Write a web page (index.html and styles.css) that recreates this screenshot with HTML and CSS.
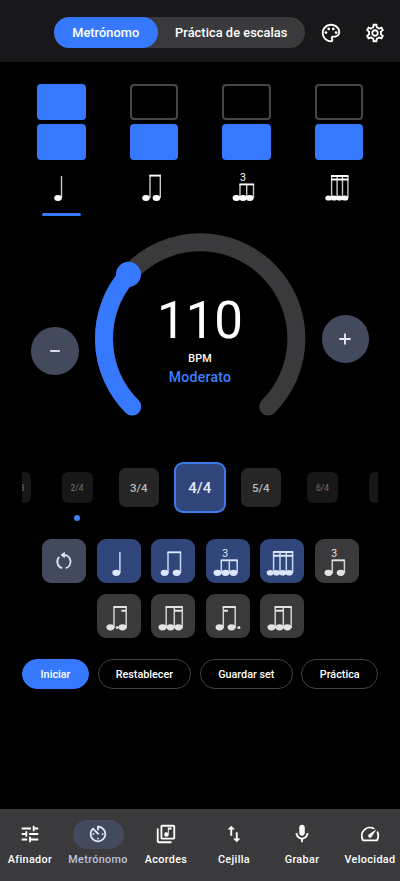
FILE: index.html
```html
<!DOCTYPE html>
<html lang="es">
<head>
<meta charset="utf-8">
<title>Metrónomo</title>
<link rel="stylesheet" href="styles.css">
</head>
<body>
<header class="topbar">
  <div class="segmented"><button class="seg seg-on">Metrónomo</button><button class="seg">Práctica de escalas</button></div>
  <svg class="top-icon palette" viewBox="0 0 24 24"><path d="M12 22C6.49 22 2 17.51 2 12S6.49 2 12 2s10 4.04 10 9c0 3.31-2.69 6-6 6h-1.77c-.28 0-.5.22-.5.5 0 .12.05.23.13.33.41.47.64 1.06.64 1.67A2.5 2.5 0 0 1 12 22zm0-18c-4.41 0-8 3.59-8 8s3.59 8 8 8c.28 0 .5-.22.5-.5a.54.54 0 0 0-.14-.35c-.41-.46-.63-1.05-.63-1.65a2.5 2.5 0 0 1 2.5-2.5H16c2.21 0 4-1.79 4-4 0-3.86-3.59-7-8-7z"/><circle cx="6.5" cy="11.5" r="1.5"/><circle cx="9.5" cy="7.5" r="1.5"/><circle cx="14.5" cy="7.5" r="1.5"/><circle cx="17.5" cy="11.5" r="1.5"/></svg>
  <svg class="top-icon gear" viewBox="0 0 24 24"><path d="M19.43 12.98c.04-.32.07-.64.07-.98s-.03-.66-.07-.98l2.11-1.65c.19-.15.24-.42.12-.64l-2-3.46c-.12-.22-.39-.3-.61-.22l-2.49 1c-.52-.4-1.08-.73-1.69-.98l-.38-2.65A.488.488 0 0 0 14 2h-4c-.25 0-.46.18-.49.42l-.38 2.65c-.61.25-1.17.59-1.69.98l-2.49-1c-.23-.09-.49 0-.61.22l-2 3.46c-.13.22-.07.49.12.64l2.11 1.65c-.04.32-.07.65-.07.98s.03.66.07.98l-2.11 1.65c-.19.15-.24.42-.12.64l2 3.46c.12.22.39.3.61.22l2.49-1c.52.4 1.08.73 1.69.98l.38 2.65c.03.24.24.42.49.42h4c.25 0 .46-.18.49-.42l.38-2.65c.61-.25 1.17-.59 1.69-.98l2.49 1c.23.09.49 0 .61-.22l2-3.46c.12-.22.07-.49-.12-.64l-2.11-1.65zm-1.98-1.71c.04.31.05.52.05.73 0 .21-.02.43-.05.73l-.14 1.13.89.7 1.08.84-.7 1.21-1.27-.51-1.04-.42-.9.68c-.43.32-.84.56-1.25.73l-1.06.43-.16 1.13-.2 1.35h-1.4l-.19-1.35-.16-1.13-1.06-.43c-.43-.18-.83-.41-1.23-.71l-.91-.7-1.06.43-1.27.51-.7-1.21 1.08-.84.89-.7-.14-1.13c-.03-.31-.05-.54-.05-.74s.02-.43.05-.73l.14-1.13-.89-.7-1.08-.84.7-1.21 1.27.51 1.04.42.9-.68c.43-.32.84-.56 1.25-.73l1.06-.43.16-1.13.2-1.35h1.39l.19 1.35.16 1.13 1.06.43c.43.18.83.41 1.23.71l.91.7 1.06-.43 1.27-.51.7 1.21-1.07.85-.89.7.14 1.13zM12 8c-2.21 0-4 1.79-4 4s1.79 4 4 4 4-1.79 4-4-1.79-4-4-4zm0 6c-1.1 0-2-.9-2-2s.9-2 2-2 2 .9 2 2-.9 2-2 2z"/></svg>
</header>

<main>
  <section class="beats">
    <div class="beat current"><i class="bar on"></i><i class="bar on"></i>
      <svg class="beat-note note" viewBox="0 0 44 44"><path class="stem" d="M22.5 12V34"/><ellipse cx="19" cy="34" rx="3.8" ry="3"/></svg></div>
    <div class="beat"><i class="bar"></i><i class="bar on"></i>
      <svg class="beat-note note" viewBox="0 0 44 44"><path class="stem" d="M18 11V34M28.3 11V34"/><path class="beam" d="M17.4 11.6H28.9"/><ellipse cx="14" cy="34" rx="3.8" ry="3"/><ellipse cx="24.4" cy="34" rx="3.8" ry="3"/></svg></div>
    <div class="beat"><i class="bar"></i><i class="bar on"></i>
      <svg class="beat-note note" viewBox="0 0 44 44"><text x="18.9" y="17">3</text><path class="stem" d="M16 20V34M22.7 20V34M29.5 20V34"/><path class="beam" d="M15.4 20.4H30.1"/><ellipse cx="12.4" cy="34" rx="3.8" ry="3"/><ellipse cx="19.1" cy="34" rx="3.8" ry="3"/><ellipse cx="25.8" cy="34" rx="3.8" ry="3"/></svg></div>
    <div class="beat"><i class="bar"></i><i class="bar on"></i>
      <svg class="beat-note note" viewBox="0 0 44 44"><path class="stem" d="M14.6 12V34M20.1 12V34M25.5 12V34M30.9 12V34"/><path class="beam" d="M14 12H31.5M14 15.5H31.5"/><ellipse cx="11.6" cy="34" rx="3.3" ry="2.6"/><ellipse cx="17" cy="34" rx="3.3" ry="2.6"/><ellipse cx="22.4" cy="34" rx="3.3" ry="2.6"/><ellipse cx="28" cy="34" rx="3.3" ry="2.6"/></svg></div>
  </section>

  <section class="tempo">
    <button class="step minus" aria-label="Menos"><svg viewBox="0 0 12 12"><path d="M1.2 6H10.8"/></svg></button>
    <div class="dial">
      <svg viewBox="0 0 212 186"><path class="track" d="M38.2 174.6A96.2 96.2 0 1 1 174.2 174.6"/><path class="value" d="M38.2 174.6A96.2 96.2 0 0 1 34.5 42.3"/><circle class="knob" cx="34.5" cy="42.3" r="12.5"/></svg>
      <div class="readout"><div class="bpm">110</div><div class="unit">BPM</div><div class="tempo-name">Moderato</div></div>
    </div>
    <button class="step plus" aria-label="Más"><svg viewBox="0 0 12 12"><path d="M.4 6H11.6M6 .4V11.6"/></svg></button>
  </section>

  <section class="meters">
    <div class="meter far edge-left"><span>8</span></div>
    <div class="meter far default">2/4</div>
    <div class="meter near">3/4</div>
    <div class="meter chosen">4/4</div>
    <div class="meter near">5/4</div>
    <div class="meter far">6/4</div>
    <div class="meter far edge-right"></div>
  </section>

  <section class="patterns">
    <button class="tile reset" aria-label="Deshacer"><svg viewBox="0 0 44 44"><path d="M23.8 29.1A6.7 6.7 0 0 0 22 16M20.2 29.1A6.7 6.7 0 0 1 17.2 18"/><path class="tip" d="M22.8 12.8V19.2L18.5 16Z"/></svg></button>
    <button class="tile on"><svg class="note" viewBox="0 0 44 44"><path class="stem" d="M22.9 13V34"/><ellipse cx="19.3" cy="33.8" rx="4" ry="3.1"/></svg></button>
    <button class="tile on"><svg class="note" viewBox="0 0 44 44"><path class="stem" d="M17 13V34M29.5 13V34"/><path class="beam" d="M16.4 13.3H30.1"/><ellipse cx="13.6" cy="33.8" rx="4" ry="3.1"/><ellipse cx="25.7" cy="33.8" rx="4" ry="3.1"/></svg></button>
    <button class="tile on"><svg class="note" viewBox="0 0 44 44"><text x="19.3" y="18">3</text><path class="stem" d="M15.3 21V34M23.3 21V34M31.2 21V34"/><path class="beam" d="M14.7 21.3H31.8"/><ellipse cx="11.5" cy="33.8" rx="4" ry="3.1"/><ellipse cx="19.5" cy="33.8" rx="4" ry="3.1"/><ellipse cx="27.5" cy="33.8" rx="4" ry="3.1"/></svg></button>
    <button class="tile on"><svg class="note" viewBox="0 0 44 44"><path class="stem" d="M13.6 13V34M20 13V34M26.3 13V34M32.6 13V34"/><path class="beam" d="M13 13H33.2M13 16.7H33.2"/><ellipse cx="10.2" cy="33.8" rx="3.5" ry="2.8"/><ellipse cx="16.6" cy="33.8" rx="3.5" ry="2.8"/><ellipse cx="22.8" cy="33.8" rx="3.5" ry="2.8"/><ellipse cx="29.2" cy="33.8" rx="3.5" ry="2.8"/></svg></button>
    <button class="tile"><svg class="note" viewBox="0 0 44 44"><text x="19.3" y="18">3</text><path class="stem" d="M17.3 21V34M29.4 21V34"/><path class="beam" d="M16.7 21.3H30"/><ellipse cx="13.5" cy="33.8" rx="4" ry="3.1"/><ellipse cx="25.7" cy="33.8" rx="4" ry="3.1"/></svg></button>
    <button class="tile second-row"><svg class="note" viewBox="0 0 44 44"><path class="stem" d="M17 13V34M29.2 13V34"/><path class="beam" d="M16.4 13H29.8M24.3 16.7H29.2"/><ellipse cx="13.4" cy="33.3" rx="4" ry="3.1"/><ellipse cx="25.5" cy="33.3" rx="4" ry="3.1"/><circle cx="20.2" cy="33.5" r="1.5"/></svg></button>
    <button class="tile"><svg class="note" viewBox="0 0 44 44"><path class="stem" d="M15.2 13V34M23.3 13V34M31.3 13V34"/><path class="beam" d="M14.6 13H31.9M23.3 16.7H31.3"/><ellipse cx="11.5" cy="33.3" rx="4" ry="3.1"/><ellipse cx="19.5" cy="33.3" rx="4" ry="3.1"/><ellipse cx="27.5" cy="33.3" rx="4" ry="3.1"/></svg></button>
    <button class="tile"><svg class="note" viewBox="0 0 44 44"><path class="stem" d="M17.3 13V34M29.2 13V34"/><path class="beam" d="M16.7 13H29.8M17.3 16.7H22"/><ellipse cx="13.6" cy="33.3" rx="4" ry="3.1"/><ellipse cx="25.5" cy="33.3" rx="4" ry="3.1"/><circle cx="32.8" cy="33.5" r="1.6"/></svg></button>
    <button class="tile"><svg class="note" viewBox="0 0 44 44"><path class="stem" d="M15.2 13V34M23.3 13V34M31.2 13V34"/><path class="beam" d="M14.6 13H31.8M15.2 16.7H23.3"/><ellipse cx="11.5" cy="33.3" rx="4" ry="3.1"/><ellipse cx="19.5" cy="33.3" rx="4" ry="3.1"/><ellipse cx="27.4" cy="33.3" rx="4" ry="3.1"/></svg></button>
  </section>

  <section class="actions">
    <button class="action primary">Iniciar</button>
    <button class="action">Restablecer</button>
    <button class="action">Guardar set</button>
    <button class="action">Práctica</button>
  </section>
</main>

<nav class="bottom-nav">
  <a class="nav-item"><span class="nav-pill"><svg viewBox="0 0 24 24"><path d="M3 17v2h6v-2H3zM3 5v2h10V5H3zm10 16v-2h8v-2h-8v-2h-2v6h2zM7 9v2H3v2h4v2h2V9H7zm14 4v-2H11v2h10zm-6-4h2V7h4V5h-4V3h-2v6z"/></svg></span>Afinador</a>
  <a class="nav-item active"><span class="nav-pill"><svg viewBox="0 0 24 24"><path d="M12 3h-1v5h2V5.080c3.390.49 6 3.390 6 6.920 0 3.870-3.130 7-7 7s-7-3.130-7-7c0-1.680.59-3.220 1.580-4.420L12 13l1.410-1.410-6.800-6.800v.02C4.420 6.450 3 9.050 3 12c0 4.970 4.020 9 9 9a9 9 0 0 0 0-18z"/><circle cx="17" cy="12" r="1"/><circle cx="7" cy="12" r="1"/><circle cx="12" cy="17" r="1"/></svg></span>Metrónomo</a>
  <a class="nav-item"><span class="nav-pill"><svg viewBox="0 0 24 24"><path d="M20 2H8c-1.100 0-2 .9-2 2v12c0 1.100.9 2 2 2h12c1.100 0 2-.9 2-2V4c0-1.100-.9-2-2-2zm0 14H8V4h12v12zm-7.500-1c1.380 0 2.500-1.120 2.500-2.500V7h3V5h-4v5.510A2.500 2.500 0 1 0 12.500 15zM4 6H2v14c0 1.100.9 2 2 2h14v-2H4V6z"/></svg></span>Acordes</a>
  <a class="nav-item"><span class="nav-pill"><svg viewBox="0 0 24 24"><path d="M16 17.010V10h-2v7.010h-3L15 21l4-3.990h-3zM9 3 5 6.990h3V14h2V6.990h3L9 3z"/></svg></span>Cejilla</a>
  <a class="nav-item"><span class="nav-pill"><svg viewBox="0 0 24 24"><path d="M12 14c1.660 0 3-1.340 3-3V5c0-1.660-1.340-3-3-3S9 3.340 9 5v6c0 1.660 1.340 3 3 3z"/><path d="M17 11c0 2.760-2.240 5-5 5s-5-2.240-5-5H5c0 3.530 2.610 6.430 6 6.920V21h2v-3.080c3.390-.49 6-3.390 6-6.920h-2z"/></svg></span>Grabar</a>
  <a class="nav-item"><span class="nav-pill"><svg viewBox="0 0 24 24"><path d="m20.380 8.570-1.230 1.850a8 8 0 0 1-.22 7.580H5.070A8 8 0 0 1 15.580 6.850l1.850-1.230A10 10 0 0 0 3.350 19a2 2 0 0 0 1.720 1h13.850a2 2 0 0 0 1.740-1 10 10 0 0 0-.27-10.440z"/><path d="M10.590 15.410a2 2 0 0 0 2.830 0l5.660-8.490-8.490 5.660a2 2 0 0 0 0 2.830z"/></svg></span>Velocidad</a>
</nav>
</body>
</html>
```

FILE: styles.css
```css
* { box-sizing: border-box; }
body {
  margin: 0;
  width: 400px;
  height: 881px;
  overflow: hidden;
  display: flex;
  flex-direction: column;
  background: #000;
  color: #fff;
  font-family: Roboto, "Liberation Sans", sans-serif;
}
button {
  font: inherit;
  letter-spacing: inherit;
  color: inherit;
  border: 0;
  padding: 0;
  margin: 0;
  flex: none;
}
svg { display: block; overflow: visible; }

.topbar {
  height: 62px;
  padding: 3px 14px 0 54px;
  display: flex;
  align-items: center;
  background: #18181a;
}
.segmented {
  display: flex;
  width: 251px;
  height: 31px;
  border-radius: 16px;
  background: #3a3a3c;
  font-size: 12.8px;
  font-weight: 500;
  letter-spacing: .05px;
}
.seg { background: none; flex: 1; }
.seg-on { flex: none; width: 103.5px; border-radius: 16px; background: #3679ff; }
.top-icon { width: 22px; height: 22px; fill: #fff; }
.palette { margin-left: 15px; }
.gear { margin-left: 22px; }

main { flex: 1; }
.beats {
  display: grid;
  grid-template-columns: repeat(4, 92.5px);
  padding: 21.5px 15px 0;
  height: 154px;
}
.beat { display: flex; flex-direction: column; align-items: center; }
.bar {
  width: 48.5px;
  height: 36.5px;
  margin-bottom: 3.5px;
  border: 2px solid #47474b;
  border-radius: 4px;
}
.bar.on { background: #3679ff; border-color: #3679ff; }
.note { fill: #fff; }
.note .stem { fill: none; stroke: #c8c8c8; stroke-width: 1.4; }
.note .beam { fill: none; stroke: #fff; stroke-width: 1.9; }
.note text { font-size: 10.5px; text-anchor: middle; }
.beat-note { width: 44px; height: 44px; flex: none; }
.current::after {
  content: "";
  width: 39.5px;
  height: 3px;
  margin-top: 5px;
  border-radius: 2px;
  background: #3679ff;
}

.tempo {
  height: 208px;
  padding: 16px 31px 0;
  display: flex;
  justify-content: space-between;
}
.step {
  width: 47.5px;
  height: 47.5px;
  border-radius: 50%;
  background: #434a5e;
  display: grid;
  place-items: center;
}
.step svg { width: 12px; height: 12px; fill: none; stroke: #e8edff; stroke-width: 1.8; }
.minus { margin-top: 95px; }
.plus { margin-top: 83px; }
.dial { width: 212px; height: 186px; flex: none; display: grid; }
.dial > * { grid-area: 1 / 1; }
.track, .value { fill: none; stroke-width: 18; stroke-linecap: round; stroke: #3a3a3c; }
.value { stroke: #3679ff; }
.knob { fill: #3679ff; }
.readout { padding-top: 56px; text-align: center; }
.bpm { font-size: 51px; line-height: 65px; }
.unit { font-size: 10.8px; line-height: 14px; font-weight: 500; letter-spacing: .2px; margin-top: -1px; }
.tempo-name { font-size: 14px; line-height: 18px; font-weight: 500; letter-spacing: .3px; margin-top: 2px; color: #3b80ff; }

.meters {
  margin: 38px 22px 0;
  height: 51px;
  display: flex;
  align-items: center;
}
.meter { flex: none; display: grid; place-items: center; font-weight: 500; }
.far { width: 31px; height: 31px; border-radius: 6px; background: #171717; color: #737373; font-size: 8.5px; font-weight: 400; }
.near { width: 39.5px; height: 39.5px; border-radius: 7px; background: #262627; color: #b8b8b8; font-size: 11.5px; }
.chosen {
  width: 51.5px;
  height: 51.5px;
  margin: 0 15.5px;
  border: 2px solid #3d7aeb;
  border-radius: 9px;
  background: #304579;
  color: #e5ecff;
  font-size: 15px;
}
.edge-left { width: 9px; border-radius: 0 6px 6px 0; overflow: hidden; justify-items: start; }
.edge-left span { margin-left: -2.5px; }
.default { margin-left: 30.5px; position: relative; }
.default + .near { margin-left: 26.5px; }
.near + .far { margin-left: 26.5px; }
.edge-right { width: 9px; margin-left: auto; border-radius: 6px 0 0 6px; }
.default::after {
  content: "";
  position: absolute;
  top: 43px;
  width: 6px;
  height: 6px;
  border-radius: 50%;
  background: #4480f5;
}

.patterns {
  margin: 26px 0 0 42px;
  display: grid;
  grid-template-columns: repeat(6, 44px);
  gap: 10.7px 10.5px;
}
.tile { width: 44px; height: 44px; border-radius: 9px; background: #3a3a3c; }
.tile .note { fill: #e3e3e3; }
.tile .stem { stroke: #d0d0d0; stroke-width: 1.5; }
.tile .beam { stroke: #e3e3e3; }
.tile.on { background: #304579; }
.tile.on .note { fill: #dce6ff; }
.tile.on .stem { stroke: #c8d5f4; }
.tile.on .beam { stroke: #dce6ff; }
.tile.reset { background: #434a5e; }
.reset svg { fill: none; stroke: #dce6ff; stroke-width: 1.8; }
.reset .tip { fill: #dce6ff; stroke: none; }
.second-row { grid-column: 2; }

.actions {
  margin: 21px 22px 0;
  display: grid;
  grid-template-columns: 67px 93.5px 93px 76.5px;
  justify-content: space-between;
}
.action {
  height: 30.5px;
  padding-top: 1px;
  border: 1px solid #414144;
  border-radius: 16px;
  background: #000;
  font-size: 10.8px;
  font-weight: 500;
}
.primary { background: #3679ff; border-color: #3679ff; }

.bottom-nav {
  height: 72px;
  padding: 10.5px 0 0;
  margin: 0 -4px;
  display: grid;
  grid-template-columns: repeat(6, 1fr);
  background: #3a3a3c;
}
.nav-item {
  display: flex;
  flex-direction: column;
  align-items: center;
  font-size: 10.8px;
  line-height: 14px;
  font-weight: 500;
  letter-spacing: .35px;
  gap: 4px;
}
.nav-pill { width: 51px; height: 29.5px; border-radius: 15px; display: grid; place-items: center; }
.nav-pill svg { width: 22px; height: 22px; fill: #fff; }
.active { color: #bfc2df; }
.active .nav-pill { background: #434a5e; }
.active .nav-pill svg { fill: #e0e6ff; }
```
